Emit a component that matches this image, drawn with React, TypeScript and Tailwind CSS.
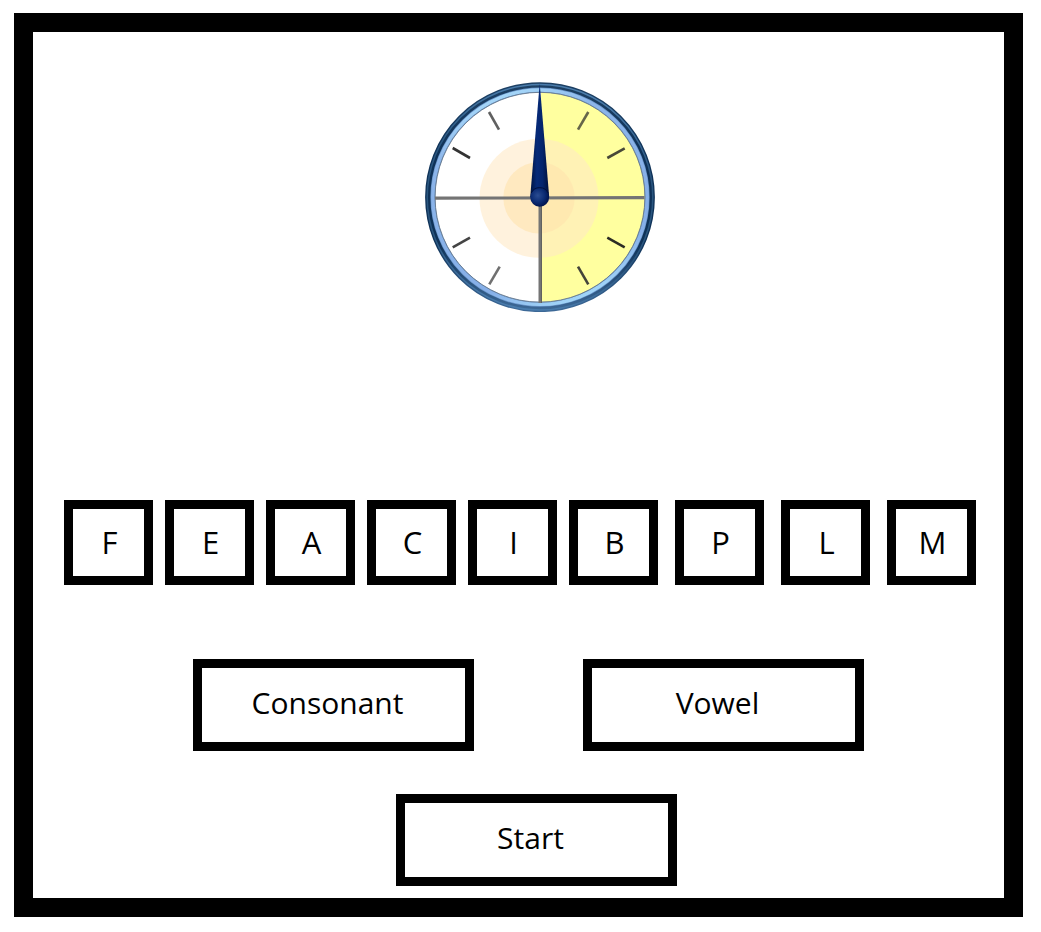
const firstLetters = ["F", "E", "A", "C", "I", "B"];
const lastLetters = ["P", "L", "M"];

const ticks: [number, number, number, number, string][] = [
  [64, 30, 74, 47.7, "#606060"],
  [27.7, 66, 45, 76, "#333333"],
  [163.3, 30, 153, 47.7, "#66664a"],
  [199.7, 66.3, 182.3, 76, "#484838"],
  [45, 155.7, 27.7, 165.3, "#444444"],
  [74.7, 184.7, 64.3, 202.3, "#707070"],
  [182.3, 155.7, 199.7, 165.3, "#2c2c24"],
  [153, 184.7, 163.3, 202.3, "#44443a"],
];

function Clock() {
  return (
    <svg viewBox="0 0 230 230" className="size-[230px]" role="img" aria-label="Clock">
      <defs>
        <linearGradient id="rim" x1="0" y1="0" x2="0" y2="1">
          <stop offset="0" stopColor="#1d4064" />
          <stop offset="0.3" stopColor="#0f3258" />
          <stop offset="0.7" stopColor="#0f3258" />
          <stop offset="1" stopColor="#3c6896" />
        </linearGradient>
        <linearGradient id="rimShine" x1="0.35" y1="0" x2="0.2" y2="1">
          <stop offset="0" stopColor="#4a7cab" />
          <stop offset="0.3" stopColor="#2a567f" />
          <stop offset="0.7" stopColor="#2a567f" />
          <stop offset="1" stopColor="#4f83b5" />
        </linearGradient>
        <linearGradient id="bevel" x1="0.3" y1="0" x2="0.7" y2="1">
          <stop offset="0" stopColor="#a9dcfb" />
          <stop offset="0.2" stopColor="#8cb5ea" />
          <stop offset="0.8" stopColor="#86afe8" />
          <stop offset="1" stopColor="#a6dcfb" />
        </linearGradient>
        <linearGradient id="needle" x1="0" y1="0" x2="1" y2="0">
          <stop offset="0" stopColor="#001440" />
          <stop offset="0.35" stopColor="#062a78" />
          <stop offset="0.65" stopColor="#04246c" />
          <stop offset="1" stopColor="#000f38" />
        </linearGradient>
        <radialGradient id="hub" cx="0.4" cy="0.4" r="0.6">
          <stop offset="0" stopColor="#2a4c92" />
          <stop offset="0.6" stopColor="#0c2c74" />
          <stop offset="1" stopColor="#001550" />
        </radialGradient>
      </defs>
      <circle cx="115" cy="115.3" r="105.5" fill="#ffffff" />
      <path d="M116 10 A105.3 105.3 0 0 1 116 220.6 Z" fill="#ffff9f" />
      <circle cx="114" cy="116.3" r="59.5" fill="#ffe8c4" fillOpacity="0.58" />
      <circle cx="114" cy="115.8" r="35.7" fill="#ffe3ae" fillOpacity="0.6" />
      <circle cx="115" cy="115.2" r="111.7" fill="none" stroke="url(#rim)" strokeWidth="6.4" />
      <circle cx="115" cy="115.2" r="112.8" fill="none" stroke="url(#rimShine)" strokeWidth="1.5" />
      <circle cx="115" cy="115.2" r="107.2" fill="none" stroke="#6a95c9" strokeWidth="4.8" />
      <circle cx="115" cy="115.2" r="107.2" fill="none" stroke="url(#bevel)" strokeWidth="3.4" />
      <circle cx="115" cy="115.2" r="104.9" fill="none" stroke="#66788c" strokeWidth="0.9" />
      {ticks.map(([x1, y1, x2, y2, color]) => (
        <line key={`${x1}-${y1}`} x1={x1} y1={y1} x2={x2} y2={y2} stroke={color} strokeWidth="2.6" />
      ))}
      <path d="M10 116.2 L219.5 115.6" stroke="#747474" strokeWidth="3.2" />
      <path d="M115.2 116 V221" stroke="#747474" strokeWidth="3.4" />
      <path d="M116.5 116 V221" stroke="#555555" strokeWidth="0.7" />
      <path d="M114.7 1.5 L105.2 115 L124.2 115 Z" fill="url(#needle)" />
      <circle cx="114.7" cy="115.4" r="9.4" fill="url(#hub)" />
      <path d="M106.2 111 A9.4 9.4 0 0 1 123.2 111" fill="none" stroke="#000f3c" strokeWidth="1" />
    </svg>
  );
}

function Tiles({ letters, className }: { letters: string[]; className: string }) {
  return (
    <ul className={`flex ${className}`}>
      {letters.map((letter) => (
        <li
          key={letter}
          className="flex h-[85px] w-[89px] items-center justify-center border-[9px] border-black pl-[3px] text-[31px] leading-none"
        >
          {letter}
        </li>
      ))}
    </ul>
  );
}

function GameButton({ label }: { label: string }) {
  return (
    <button
      type="button"
      className="h-[92px] w-[281px] cursor-pointer border-[9px] border-black bg-white pr-3 pb-1 text-[30px] leading-none"
    >
      {label}
    </button>
  );
}

export default function App() {
  return (
    <div className="min-h-screen bg-white pt-[13px] pr-[18px] pb-[15px] pl-[14px] font-['Open_Sans','Noto_Sans',sans-serif] text-black">
      <main className="flex flex-col border-[19px] border-black pt-[50px] pr-7 pb-3 pl-[30px]">
        <div className="flex justify-center pl-10">
          <Clock />
        </div>
        <div className="mt-[188px] flex justify-center gap-[17px]">
          <Tiles letters={firstLetters} className="gap-3" />
          <Tiles letters={lastLetters} className="gap-[17px]" />
        </div>
        <div className="mt-[74px] flex justify-center gap-[109px] pl-[18px]">
          <GameButton label="Consonant" />
          <GameButton label="Vowel" />
        </div>
        <div className="mt-[43px] flex justify-center pl-[34px]">
          <GameButton label="Start" />
        </div>
      </main>
    </div>
  );
}
